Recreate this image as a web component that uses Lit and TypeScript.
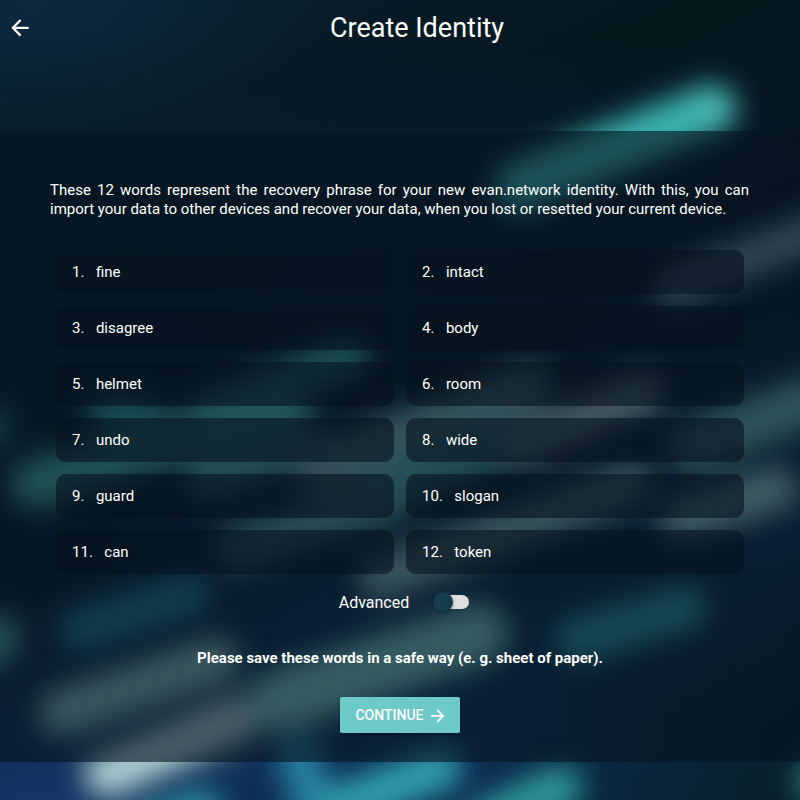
import { LitElement, html, svg, css } from "lit";
import { customElement, property } from "lit/decorators.js";

type Streak = [x1: number, y1: number, x2: number, y2: number, width: number, color: string];

const STREAKS: Streak[] = [
  [520, 186, 712, 109, 50, "#3cb4b0"],
  [712, 108, 717, 106, 24, "#58bab4"],
  [674, 287, 830, 226, 38, "#7691a0"],
  [205, 414, 350, 357, 38, "#3fb5b2"],
  [108, 414, 150, 420, 40, "#30a3a5"],
  [34, 484, 286, 408, 46, "#48b4ae"],
  [208, 478, 310, 444, 42, "#4fa5a6"],
  [320, 472, 410, 436, 50, "#7d9fa6"],
  [350, 455, 530, 386, 46, "#7fb8b4"],
  [385, 488, 500, 442, 50, "#4aa8a6"],
  [520, 444, 644, 394, 42, "#a2c4c0"],
  [237, 548, 390, 500, 42, "#5fa8a6"],
  [380, 578, 632, 484, 44, "#84b6b2"],
  [692, 446, 815, 400, 48, "#6cb7b2"],
  [682, 518, 776, 489, 44, "#9acbc6"],
  [-20, 648, -3, 638, 46, "#52aeae"],
  [-10, 430, -6, 426, 34, "#268088"],
  [80, 630, 190, 594, 42, "#207e98"],
  [62, 712, 216, 660, 46, "#8bbfbb"],
  [107, 774, 238, 718, 46, "#aecfd0"],
  [280, 700, 478, 634, 62, "#7cc8c0"],
  [577, 640, 684, 608, 46, "#2d96a0"],
  [298, 754, 316, 810, 42, "#2780a0"],
  [340, 808, 440, 768, 44, "#30a0aa"],
  [485, 824, 560, 788, 44, "#2f979e"],
  [130, 834, 204, 807, 36, "#2d90a0"],
  [812, 782, 830, 770, 32, "#2d8a92"],
];

@customElement("light-backdrop")
class LightBackdrop extends LitElement {
  static styles = css`
    :host {
      display: block;
      overflow: hidden;
      background:
        radial-gradient(ellipse 300px 130px at 30px 0, rgba(14, 42, 66, 0.9) 0%, rgba(13, 44, 68, 0) 100%),
        radial-gradient(ellipse 380px 240px at 40px 810px, #14386a 0%, rgba(18, 50, 95, 0) 100%),
        radial-gradient(ellipse 440px 330px at 400px 700px, #0d3360 0%, rgba(10, 40, 80, 0) 100%),
        radial-gradient(ellipse 320px 240px at 780px 490px, #0d3058 0%, rgba(10, 40, 80, 0) 100%),
        radial-gradient(ellipse 480px 340px at 100px 400px, rgba(8, 34, 58, 0.85) 0%, rgba(8, 32, 56, 0) 100%),
        radial-gradient(ellipse 400px 160px at 500px 190px, rgba(8, 30, 50, 0.7) 0%, rgba(8, 30, 50, 0) 100%),
        linear-gradient(155deg, #07202f 0%, #07181f 28%, #06141f 48%, #061b26 70%, #081e26 100%);
    }
    .lights {
      display: block;
      width: 100%;
      height: 100%;
    }
  `;
  render() {
    return html`<svg class="lights" viewBox="0 0 800 800" preserveAspectRatio="none">
      <defs>
        <filter
          id="soft"
          filterUnits="userSpaceOnUse"
          x="-60"
          y="-60"
          width="920"
          height="920"
          color-interpolation-filters="sRGB"
        >
          <feGaussianBlur stdDeviation="14" />
        </filter>
      </defs>
      <g filter="url(#soft)" fill="none" stroke-linecap="round">
        ${STREAKS.map(
          ([x1, y1, x2, y2, w, c]) =>
            svg`<path d="M${x1} ${y1}L${x2} ${y2}" stroke=${c} stroke-width=${w} />`
        )}
      </g>
    </svg>`;
  }
}

@customElement("word-tile")
class WordTile extends LitElement {
  @property({ type: Number }) position = 0;
  @property() word = "";
  static styles = css`
    :host {
      display: flex;
      align-items: center;
      gap: 11.5px;
      height: 44px;
      box-sizing: border-box;
      padding: 0 16px;
      border-radius: 10px;
      background: rgba(6, 19, 30, 0.6);
      font-size: 15px;
    }
  `;
  render() {
    return html`<span>${this.position}.</span><span>${this.word}</span>`;
  }
}

@customElement("app-root")
class AppRoot extends LitElement {
  static styles = css`
    :host {
      display: block;
      position: relative;
      height: 100vh;
      overflow: hidden;
      color: #fff;
      font-family: Roboto, sans-serif;
    }
    light-backdrop {
      position: absolute;
      inset: 0;
    }
    .page {
      position: relative;
      display: flex;
      flex-direction: column;
    }
    .header {
      display: flex;
      align-items: center;
      height: 56px;
      margin-bottom: 75px;
    }
    .back {
      width: 24px;
      height: 24px;
      margin-left: 8px;
      flex: none;
    }
    .title {
      flex: 1;
      margin: 0;
      padding-left: 2px;
      text-align: center;
      font-size: 27px;
      font-weight: 400;
      line-height: 56px;
    }
    .panel {
      display: flex;
      flex-direction: column;
      align-items: center;
      height: 631px;
      box-sizing: border-box;
      padding: 50px 50px 0;
      background: rgba(6, 20, 32, 0.6);
    }
    .intro {
      margin: 0;
      width: 699px;
      align-self: flex-start;
      font-size: 15px;
      line-height: 19px;
      text-align: justify;
      word-spacing: -0.03px;
    }
    .words {
      display: grid;
      grid-template-columns: 1fr 1fr;
      gap: 12px;
      width: 688px;
      margin-top: 31px;
    }
    .advanced {
      display: flex;
      align-items: center;
      height: 24px;
      margin-top: 16px;
      margin-left: 8px;
      font-size: 16px;
    }
    .toggle {
      position: relative;
      width: 31px;
      height: 14px;
      margin-left: 29px;
      border-radius: 7px;
      background: #dedede;
    }
    .thumb {
      position: absolute;
      left: -5px;
      top: -3px;
      width: 20px;
      height: 20px;
      border-radius: 50%;
      background: #163c4c;
      box-shadow: 0 1px 3px rgba(0, 0, 0, 0.45);
    }
    .notice {
      margin: 34px 0 0;
      font-size: 15px;
      font-weight: 700;
      line-height: 20px;
    }
    .continue {
      display: flex;
      align-items: center;
      justify-content: center;
      width: 120px;
      height: 36px;
      margin-top: 29px;
      padding: 0 0 0 3px;
      border: 0;
      border-radius: 2px;
      background: #6dcac8;
      color: #fff;
      font: 500 14px Roboto, sans-serif;
      box-shadow: 0 2px 3px rgba(0, 0, 0, 0.3);
    }
    .next {
      width: 20px;
      height: 20px;
      margin-left: 4px;
    }
  `;

  private words = [
    "fine", "intact", "disagree", "body", "helmet", "room",
    "undo", "wide", "guard", "slogan", "can", "token",
  ];

  render() {
    return html`
      <light-backdrop></light-backdrop>
      <div class="page">
        <header class="header">
          <svg class="back" viewBox="0 0 24 24" fill="none" stroke="#fff" stroke-width="2.3">
            <path d="M20.6 11.8H5M12.6 4L4.9 11.8l7.7 7.8" />
          </svg>
          <h1 class="title">Create Identity</h1>
        </header>
        <main class="panel">
          <p class="intro">
            These 12 words represent the recovery phrase for your new evan.network identity. With
            this, you can import your data to other devices and recover your data, when you lost or
            resetted your current device.
          </p>
          <div class="words">
            ${this.words.map((w, i) => html`<word-tile .position=${i + 1} .word=${w}></word-tile>`)}
          </div>
          <div class="advanced">
            <span>Advanced</span>
            <span class="toggle"><span class="thumb"></span></span>
          </div>
          <p class="notice">Please save these words in a safe way (e. g. sheet of paper).</p>
          <button class="continue">
            CONTINUE
            <svg class="next" viewBox="0 0 20 20" fill="none" stroke="#fff" stroke-width="1.9">
              <path d="M3.2 10.9H15M9.4 5.1l5.8 5.8-5.8 5.8" />
            </svg>
          </button>
        </main>
      </div>
    `;
  }
}
